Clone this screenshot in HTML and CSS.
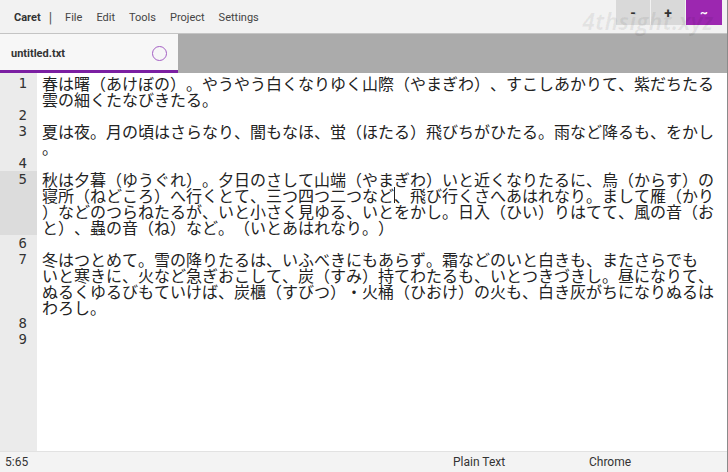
FILE: index.html
```html
<!DOCTYPE html>
<html lang="ja">
<head>
    <meta charset="UTF-8">
    <meta name="viewport" content="width=device-width, initial-scale=1.0">
    <title>Caret</title>
    <link rel="stylesheet" href="styles.css">
</head>
<body>
    <div class="app">
        <div class="top-bar">
            <div class="menu">
                <span class="brand">Caret</span>
                <span class="sep">|</span>
                <span class="menu-item">File</span>
                <span class="menu-item">Edit</span>
                <span class="menu-item">Tools</span>
                <span class="menu-item">Project</span>
                <span class="menu-item">Settings</span>
            </div>
            <div class="window-buttons">
                <span class="win-btn">-</span>
                <span class="win-btn">+</span>
                <span class="win-btn close">~</span>
            </div>
            <div class="watermark">4thsight.xyz</div>
        </div>

        <div class="tab-bar">
            <div class="tab active">
                <span class="tab-name">untitled.txt</span>
                <span class="tab-dot"></span>
            </div>
        </div>

        <div class="editor">
            <div class="line">
                <div class="num">1</div>
                <div class="text">
                    <div class="row">春は曙（あけぼの）。やうやう白くなりゆく山際（やまぎわ）、すこしあかりて、紫だちたる</div>
                    <div class="row">雲の細くたなびきたる。</div>
                </div>
            </div>
            <div class="line">
                <div class="num">2</div>
                <div class="text"><div class="row">&nbsp;</div></div>
            </div>
            <div class="line">
                <div class="num">3</div>
                <div class="text">
                    <div class="row">夏は夜。月の頃はさらなり、闇もなほ、蛍（ほたる）飛びちがひたる。雨など降るも、をかし</div>
                    <div class="row">。</div>
                </div>
            </div>
            <div class="line">
                <div class="num">4</div>
                <div class="text"><div class="row">&nbsp;</div></div>
            </div>
            <div class="line current">
                <div class="num">5</div>
                <div class="text">
                    <div class="row">秋は夕暮（ゆうぐれ）。夕日のさして山端（やまぎわ）いと近くなりたるに、烏（からす）の</div>
                    <div class="row">寝所（ねどころ）へ行くとて、三つ四つ二つなど<span class="cursor"></span>、飛び行くさへあはれなり。まして雁（かり</div>
                    <div class="row">）などのつらねたるが、いと小さく見ゆる、いとをかし。日入（ひい）りはてて、風の音（お</div>
                    <div class="row">と）、蟲の音（ね）など。（いとあはれなり。）</div>
                </div>
            </div>
            <div class="line">
                <div class="num">6</div>
                <div class="text"><div class="row">&nbsp;</div></div>
            </div>
            <div class="line">
                <div class="num">7</div>
                <div class="text">
                    <div class="row">冬はつとめて。雪の降りたるは、いふべきにもあらず。霜などのいと白きも、またさらでも</div>
                    <div class="row">いと寒きに、火など急ぎおこして、炭（すみ）持てわたるも、いとつきづきし。昼になりて、</div>
                    <div class="row">ぬるくゆるびもていけば、炭櫃（すびつ）・火桶（ひおけ）の火も、白き灰がちになりぬるは</div>
                    <div class="row">わろし。</div>
                </div>
            </div>
            <div class="line">
                <div class="num">8</div>
                <div class="text"><div class="row">&nbsp;</div></div>
            </div>
            <div class="line">
                <div class="num">9</div>
                <div class="text"><div class="row">&nbsp;</div></div>
            </div>
            <div class="line filler">
                <div class="num"></div>
                <div class="text"></div>
            </div>
        </div>

        <div class="status-bar">
            <span class="pos">5:65</span>
            <span class="mode">Plain Text</span>
            <span class="theme">Chrome</span>
        </div>
    </div>
</body>
</html>
```

FILE: styles.css
```css
html, body {
    margin: 0;
    padding: 0;
    height: 100%;
}
body {
    font-family: Roboto, 'Noto Sans', sans-serif;
    background-color: #fff;
    color: #333;
    overflow: hidden;
}
.app {
    display: flex;
    flex-direction: column;
    height: 100vh;
    border-right: 1px solid #8a8a8a;
    box-sizing: border-box;
}
.top-bar {
    position: relative;
    display: flex;
    justify-content: space-between;
    height: 33px;
    background-color: #f2f2f2;
    border-bottom: 1px solid #c4c4c4;
}
.menu {
    display: flex;
    align-items: center;
    padding-left: 14px;
    padding-top: 2px;
    font-size: 11px;
    color: #444;
}
.brand {
    font-weight: bold;
    color: #333;
}
.sep {
    margin: 0 13px 0 8px;
    font-size: 14px;
    color: #555;
}
.menu-item {
    margin-right: 14px;
}
.window-buttons {
    display: flex;
    align-items: flex-start;
    gap: 1px;
    padding-right: 5px;
}
.win-btn {
    display: flex;
    align-items: center;
    justify-content: center;
    width: 34px;
    height: 25px;
    background-color: #d9d9d9;
    font-size: 14px;
    font-weight: bold;
    color: #333;
}
.win-btn.close {
    width: 36px;
    background-color: #9c27b0;
    color: #fff;
    font-size: 12px;
}
.watermark {
    position: absolute;
    right: 14px;
    top: 5px;
    font-family: 'Open Sans', sans-serif;
    font-size: 23px;
    font-weight: bold;
    font-style: italic;
    color: rgba(0, 0, 0, 0.06);
    pointer-events: none;
}
.tab-bar {
    display: flex;
    height: 39px;
    background-color: #ababab;
}
.tab {
    display: flex;
    align-items: center;
    justify-content: space-between;
    width: 178px;
    box-sizing: border-box;
    padding: 2px 11px 0 11px;
    background-color: #f7f7f7;
    border-bottom: 3px solid #7b1fa2;
}
.tab-name {
    font-size: 11px;
    font-weight: bold;
    color: #333;
}
.tab-dot {
    width: 13px;
    height: 13px;
    border: 1.5px solid #a45fc4;
    border-radius: 50%;
}
.editor {
    flex: 1;
    display: flex;
    flex-direction: column;
    padding-top: 2px;
    background: linear-gradient(to right, #ebebeb 37px, #fff 37px);
    font-family: 'DejaVu Sans Mono', 'Noto Sans CJK JP', monospace;
    font-size: 16px;
    line-height: 16px;
    color: #222;
}
.line {
    display: flex;
}
.line.filler {
    flex: 1;
}
.num {
    width: 37px;
    box-sizing: border-box;
    padding-right: 10px;
    text-align: right;
    font-size: 14px;
    color: #333;
}
.line.current .num {
    background-color: #dcdcdc;
}
.text {
    flex: 1;
    padding-left: 5px;
}
.row {
    height: 16px;
    white-space: nowrap;
    font-family: 'Noto Sans CJK JP', sans-serif;
    text-spacing-trim: space-all;
    font-kerning: none;
}
.cursor {
    display: inline-block;
    width: 1px;
    height: 16px;
    margin-right: -1px;
    background-color: #222;
    vertical-align: top;
}
.status-bar {
    display: flex;
    align-items: center;
    height: 20px;
    background-color: #f3f3f3;
    border-top: 1px solid #e2e2e2;
    font-size: 12px;
    color: #333;
}
.pos {
    padding-left: 5px;
    width: 448px;
}
.mode {
    width: 136px;
}
```
